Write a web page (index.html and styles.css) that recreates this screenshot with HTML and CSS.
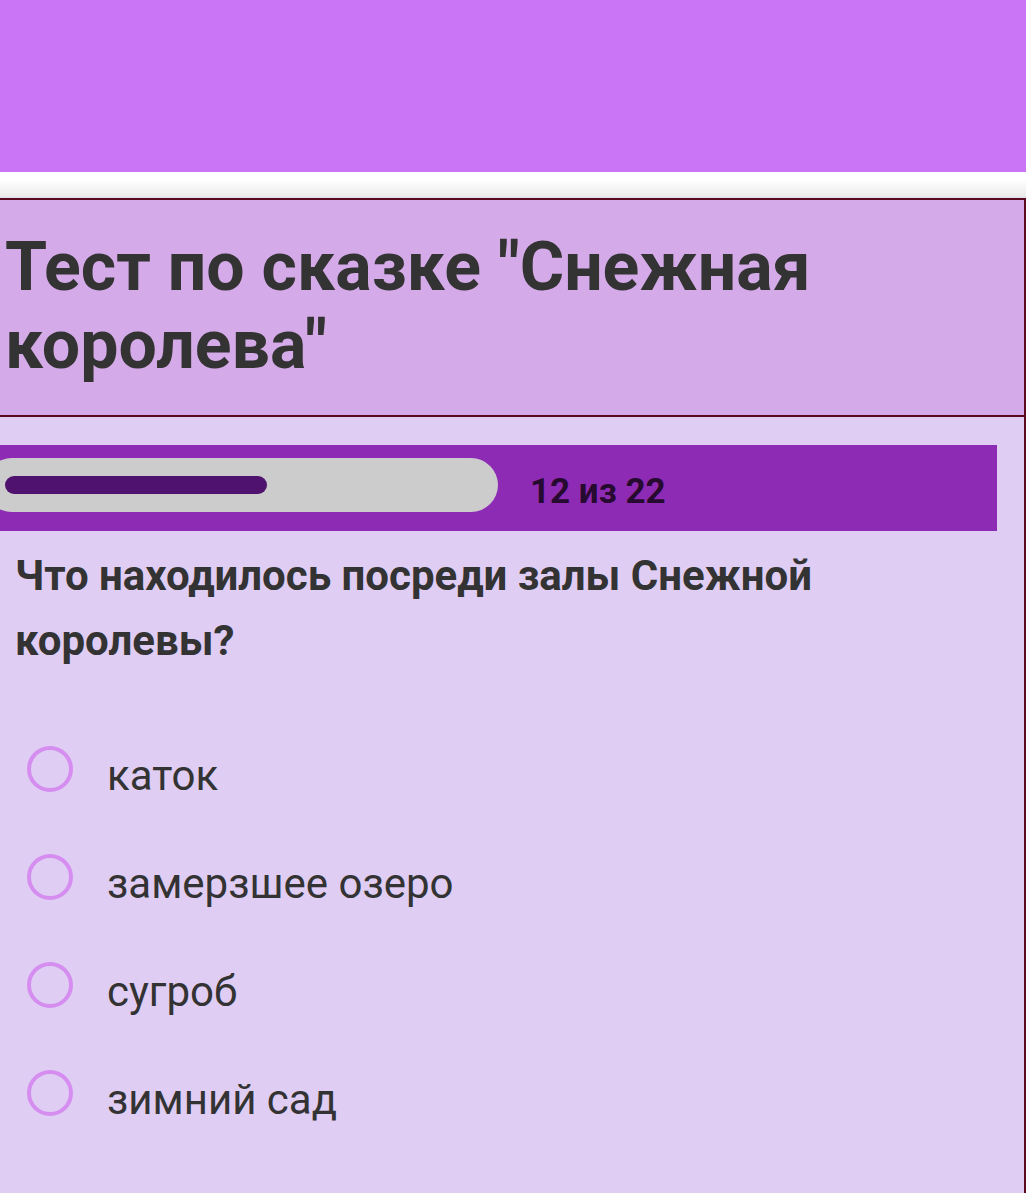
FILE: index.html
```html
<!DOCTYPE html>
<html lang="ru">
<head>
    <meta charset="UTF-8">
    <meta name="viewport" content="width=device-width, initial-scale=1.0">
    <title>Тест по сказке "Снежная королева"</title>
    <link rel="stylesheet" href="styles.css">
</head>
<body>
    <div class="topbar"></div>
    <div class="gap"></div>
    <div class="card">
        <div class="card-head">
            <h1 class="title">Тест по сказке "Снежная королева"</h1>
        </div>
        <div class="card-body">
            <div class="progress">
                <div class="track">
                    <div class="fill" style="width: 262px;"></div>
                </div>
                <span class="counter">12 из 22</span>
            </div>
            <h2 class="question">Что находилось посреди залы Снежной королевы?</h2>
            <form class="answers">
                <label class="answer"><input type="radio" name="q12" value="1"><span>каток</span></label>
                <label class="answer"><input type="radio" name="q12" value="2"><span>замерзшее озеро</span></label>
                <label class="answer"><input type="radio" name="q12" value="3"><span>сугроб</span></label>
                <label class="answer"><input type="radio" name="q12" value="4"><span>зимний сад</span></label>
            </form>
        </div>
    </div>
</body>
</html>
```

FILE: styles.css
```css
* {
    padding: 0;
    margin: 0;
    box-sizing: border-box;
}
body {
    font-family: Roboto, "Liberation Sans", Arial, sans-serif;
    background: #dfcdf3;
    color: #333333;
    overflow: hidden;
}
.topbar {
    height: 172px;
    background: #c975f5;
}
.gap {
    height: 26px;
    background: linear-gradient(#ffffff 30%, #ececec 92%, #e6dcf0);
}
.card {
    border: 2px solid #5a0a1e;
    border-left: none;
    min-height: 1000px;
}
.card-head {
    background: #d4aae8;
    border-bottom: 2px solid #5a0a1e;
    padding: 28px 10px 31px 5px;
}
.title {
    font-size: 68px;
    line-height: 78px;
    font-weight: 700;
    color: #333333;
}
.card-body {
    background: #dfcdf3;
    padding-top: 28px;
}
.progress {
    height: 86px;
    margin-right: 27px;
    background: #8e2bb5;
    display: flex;
    align-items: center;
    overflow: hidden;
}
.track {
    width: 513px;
    height: 54px;
    margin-left: -15px;
    margin-bottom: 6px;
    background: #cccccc;
    border-radius: 27px;
    display: flex;
    align-items: center;
    padding-left: 20px;
}
.fill {
    height: 18px;
    background: #4f136f;
    border-radius: 9px;
}
.counter {
    margin-left: 32px;
    margin-top: 6px;
    font-size: 35px;
    font-weight: 700;
    color: #260a30;
}
.question {
    margin-top: 12px;
    padding-left: 15px;
    font-size: 42px;
    line-height: 65px;
    font-weight: 700;
    color: #333333;
    max-width: 900px;
}
.answers {
    margin-top: 42px;
    display: flex;
    flex-direction: column;
}
.answer {
    height: 108px;
    display: flex;
    align-items: center;
    padding-left: 27px;
    font-size: 42px;
    color: #333333;
    cursor: pointer;
}
.answer input {
    appearance: none;
    width: 46px;
    height: 46px;
    border: 4px solid #d58ef0;
    border-radius: 50%;
    margin-right: 34px;
    flex-shrink: 0;
}
.answer input:checked {
    background: radial-gradient(#d58ef0 40%, transparent 45%);
}
.answer span {
    margin-top: 12px;
}
```
